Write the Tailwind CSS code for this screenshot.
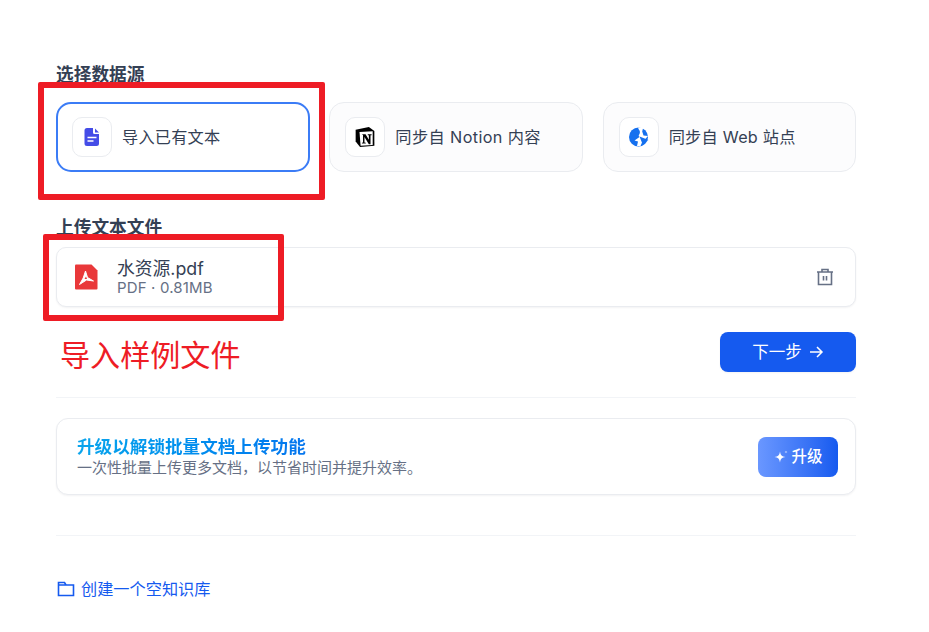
<!DOCTYPE html>
<html lang="zh-CN">
<head>
    <meta charset="UTF-8">
    <title>选择数据源</title>
    <script src="https://cdn.jsdelivr.net/npm/@tailwindcss/browser@4"></script>
</head>
<body class="bg-white">
<div class="relative h-[632px] w-[929px] overflow-hidden font-['Inter','Noto_Sans_CJK_SC',sans-serif]">
    <div class="ml-[56px] flex w-[800px] flex-col pt-[63px]">
        <!-- 数据源 -->
        <h2 class="h-[24px] text-[17.7px] leading-[24px] font-bold text-[#344054]">选择数据源</h2>
        <div class="mt-[15px] grid grid-cols-3 gap-[20px]">
            <div class="flex h-[70px] w-[254px] items-center gap-[10px] rounded-[15px] border-2 border-[#3b7cf6] bg-white px-[14px]">
                <div class="flex size-[40px] items-center justify-center rounded-[10px] border border-[#eaecf0] bg-white">
                    <svg class="size-[20px]" viewBox="0 0 20 20">
                        <path d="M5 1h6v4.500a1.500 1.500 0 0 0 1.500 1.500H17v9.500a2.500 2.500 0 0 1-2.500 2.500h-9.500a2.500 2.500 0 0 1-2.500-2.500v-13a2.500 2.500 0 0 1 2.500-2.500z" fill="#444ce7"/>
                        <path d="M13 1.500l4 4h-4z" fill="#444ce7"/>
                        <path d="M5.500 10.500h9M5.500 14h6" stroke="#fff" stroke-width="1.500"/>
                    </svg>
                </div>
                <span class="text-[16.2px] tracking-[0.2px] text-[#344054]">导入已有文本</span>
            </div>
            <div class="flex h-[70px] items-center gap-[10px] rounded-[15px] border border-[#eaecf0] bg-[#fcfcfd] px-[15px]">
                <div class="flex size-[40px] items-center justify-center rounded-[10px] border border-[#eaecf0] bg-white">
                    <svg class="size-[22px]" viewBox="0 0 20 20">
                        <path d="M1.500 3.500L13.500 1l5 3.500V18l-13 1-4-5z" fill="#000"/>
                        <path d="M5 5.500l12-.8v12.500l-11 .7z" fill="#fff"/>
                        <path d="M7.500 7.500h3l3 5v-4l-1-.2v-.8h3.500v.8l-1 .2v8h-1.500l-4-6.500v5l1.200.3v.7h-3.500v-.7l1-.3v-6.800l-.7-.2z" fill="#000"/>
                    </svg>
                </div>
                <span class="text-[16.2px] tracking-[0.4px] text-[#344054]">同步自 Notion 内容</span>
            </div>
            <div class="flex h-[70px] items-center gap-[10px] rounded-[15px] border border-[#eaecf0] bg-[#fcfcfd] px-[15px]">
                <div class="flex size-[40px] items-center justify-center rounded-[10px] border border-[#eaecf0] bg-white">
                    <svg class="size-[22px]" viewBox="0 0 22 22">
                        <circle cx="10.500" cy="11" r="9.500" fill="#1570ef"/>
                        <path d="M10 1.500c.5 2.500 2.500 3 1.800 5.500-.5 1.800-1.800 2.500-.3 4l-5 3.500 3.500 1-1 4.500h3.500l1.500-3.500 1.500-1.500 4.500-5-4.500-.5-1.300-4 1-4z" fill="#fff"/>
                        <path d="M11.500 10.500l9 3.500-3.800 1.500-1.700 3.800z" fill="#1570ef"/>
                    </svg>
                </div>
                <span class="text-[16.2px] tracking-[0.25px] text-[#344054]">同步自 Web 站点</span>
            </div>
        </div>

        <!-- 上传 -->
        <h2 class="mt-[44px] h-[24px] text-[17.7px] leading-[24px] font-bold text-[#344054]">上传文本文件</h2>
        <div class="mt-[7px] flex h-[60px] items-center rounded-[10px] border border-[#eaecf0] bg-white pr-[20px] pl-[15px] shadow-[0_1px_2px_rgba(16,24,40,0.05)]">
            <svg class="size-[28px]" viewBox="0 0 28 28">
                <path d="M3 2.500a1 1 0 0 1 1-1h15.500l6 6v18a1 1 0 0 1-1 1H4a1 1 0 0 1-1-1z" fill="#e9383a"/>
                <path d="M13.500 8l2 6.500 6 3.500-7-1-7 4.500 3.700-6.500z" fill="#fff" stroke="#fff" stroke-width="1" stroke-linejoin="round"/>
                <path d="M14 13.500l1 2.500h-2.500z" fill="#e9383a"/>
            </svg>
            <div class="ml-[17px] flex flex-col">
                <span class="text-[17.8px] leading-[22px] text-[#344054]">水资源.pdf</span>
                <span class="text-[15px] leading-[16px] tracking-[0.15px] text-[#667085]">PDF · 0.81MB</span>
            </div>
            <svg class="ml-auto size-[20px]" viewBox="0 0 20 20" fill="none" stroke="#667085" stroke-width="1.600">
                <path d="M2 5h16M7 5V2.500h6V5M3.500 5v12.500h13V5M8.500 9v4.500M11.500 9v4.500"/>
            </svg>
        </div>

        <div class="mt-[25px] flex justify-end">
            <button class="flex h-[40px] w-[136px] items-center justify-center gap-[6px] rounded-[8px] bg-[#155aef] text-[16.500px] text-white shadow-[0_1px_2px_rgba(16,24,40,0.05)]">
                下一步
                <svg class="size-[16px]" viewBox="0 0 16 16" fill="none" stroke="#fff" stroke-width="1.500">
                    <path d="M2 8h12M9 3l5 5-5 5"/>
                </svg>
            </button>
        </div>

        <div class="mt-[25px] h-px bg-[#f2f4f7]"></div>

        <!-- 升级 -->
        <div class="mt-[20px] flex h-[77px] items-center justify-between rounded-[12px] border border-[#eaecf0] bg-white pr-[17px] pl-[20px] shadow-[0_1px_2px_rgba(16,24,40,0.05)]">
            <div class="flex flex-col">
                <span class="bg-gradient-to-r from-[#0ba5ec] to-[#155aef] bg-clip-text text-[17.6px] leading-[22px] font-bold text-transparent">升级以解锁批量文档上传功能</span>
                <span class="text-[15px] leading-[20px] text-[#667085]">一次性批量上传更多文档，以节省时间并提升效率。</span>
            </div>
            <button class="flex h-[40px] w-[80px] items-center justify-center gap-[2px] rounded-[8px] bg-gradient-to-r from-[#6a97ff] to-[#155aef] text-[15.500px] font-medium text-white">
                <svg class="size-[16px]" viewBox="0 0 16 16">
                    <path d="M7 2.500c.6 3.800 1.800 5 5.500 5.500-3.700.5-4.900 1.700-5.500 5.500-.6-3.800-1.800-5-5.500-5.500 3.700-.5 4.900-1.700 5.500-5.500z" fill="#fff"/>
                    <path d="M13 1.500c.2 1 .5 1.300 1.500 1.500-1 .2-1.300.5-1.500 1.500-.2-1-.5-1.300-1.500-1.500 1-.2 1.300-.5 1.500-1.500z" fill="#fff" opacity="0.7"/>
                </svg>
                升级
            </button>
        </div>

        <div class="mt-[40px] h-px bg-[#f2f4f7]"></div>

        <!-- 空知识库 -->
        <a class="mt-[43px] flex items-center gap-[5px] text-[16.2px] leading-[20px] text-[#155aef]">
            <svg class="size-[20px]" viewBox="0 0 20 20" fill="none" stroke="#155aef" stroke-width="1.600">
                <path d="M2.500 3.500h6l1.500 2.500h7.500v10.500h-15zM2.500 6h7.500"/>
            </svg>
            创建一个空知识库
        </a>
    </div>

    <!-- 标注 -->
    <div class="absolute top-[82px] left-[38px] h-[118px] w-[287px] rounded-[2px] border-[6px] border-[#ee1c25]"></div>
    <div class="absolute top-[234px] left-[43px] h-[87px] w-[241px] rounded-[2px] border-[6px] border-[#ee1c25]"></div>
    <div class="absolute top-[334px] left-[60px] text-[30.1px] leading-[42px] text-[#ee1c25]">导入样例文件</div>
</div>
</body>
</html>
